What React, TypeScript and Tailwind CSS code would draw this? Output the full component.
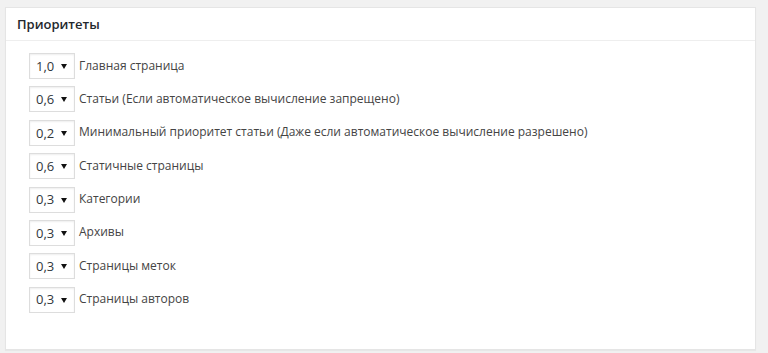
const rows: [string, string][] = [
  ['1,0', 'Главная страница'],
  ['0,6', 'Статьи (Если автоматическое вычисление запрещено)'],
  ['0,2', 'Минимальный приоритет статьи (Даже если автоматическое вычисление разрешено)'],
  ['0,6', 'Статичные страницы'],
  ['0,3', 'Категории'],
  ['0,3', 'Архивы'],
  ['0,3', 'Страницы меток'],
  ['0,3', 'Страницы авторов'],
];

export default function App() {
  return (
    <div className="min-h-screen w-full bg-[#f1f1f1] pt-[7px] pl-[5px] pr-[12px] pb-[5px] font-['Open_Sans',sans-serif] text-[#444]">
      <div className="bg-white border border-[#e5e5e5] shadow-[0_1px_1px_rgba(0,0,0,0.04)]">
        <div className="h-[33px] border-b border-[#eee] flex items-center pl-[11px]">
          <h2 className="text-[13px] font-semibold text-[#23282d] leading-none">Приоритеты</h2>
        </div>
        <div className="pt-[12px] pb-[36px] pl-[23px] flex flex-col gap-[7.4px]">
          {rows.map(([v, label], i) => (
            <div key={i} className="flex items-center h-[26px]">
              <div className="w-[46px] h-[26px] border border-[#ddd] shadow-[inset_0_1px_2px_rgba(0,0,0,0.07)] flex items-center justify-between pl-[6px] pr-[7px] text-[13px] text-[#32373c] bg-white">
                <span className="mt-[1px]">{v}</span>
                <svg width="6" height="5" viewBox="0 0 6 5" className="mt-[1px]">
                  <path d="M0 0H6L3 5Z" fill="#111" />
                </svg>
              </div>
              <span className="ml-[4px] text-[12px] text-[#444] -mt-[1px]">{label}</span>
            </div>
          ))}
        </div>
      </div>
    </div>
  );
}
